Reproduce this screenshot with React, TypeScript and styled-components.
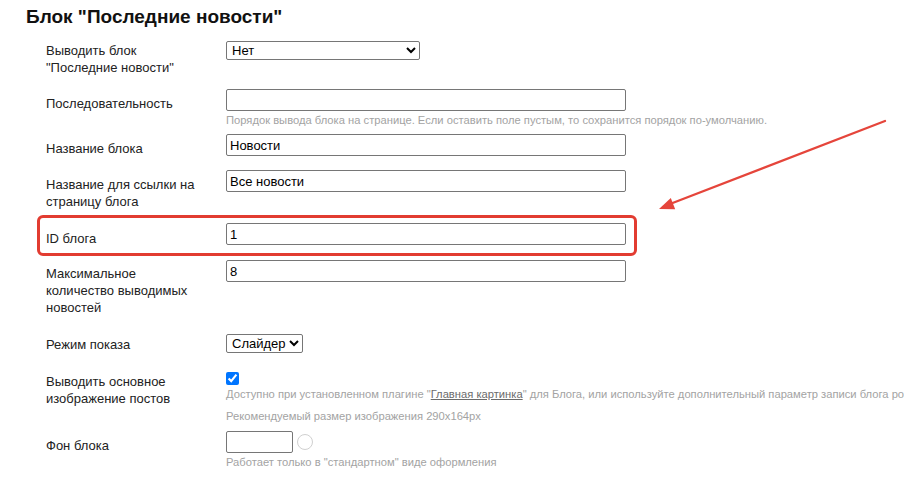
import React, { useState } from 'react';
import styled, { createGlobalStyle } from 'styled-components';

const GlobalStyle = createGlobalStyle`
  html, body {
    margin: 0;
    padding: 0;
    background: #fff;
    overflow: hidden;
  }
  body {
    font-family: 'Liberation Sans', Arial, sans-serif;
    color: #222;
  }
`;

const Page = styled.div`
  position: relative;
  width: 904px;
  height: 480px;
  padding: 6px 0 0 26px;
  box-sizing: border-box;
`;

const Title = styled.h2`
  margin: 0 0 13px;
  font-size: 19px;
  line-height: 22px;
  font-weight: bold;
  color: #111;
`;

const Form = styled.div`
  margin-left: 20px;
`;

const Row = styled.div<{ $mb?: number }>`
  display: grid;
  grid-template-columns: 180px 1fr;
  align-items: start;
  margin-bottom: ${(p) => p.$mb ?? 13}px;
`;

const Label = styled.div<{ $pt?: number }>`
  width: 160px;
  padding-top: ${(p) => p.$pt ?? 6}px;
  font-size: 13px;
  line-height: 17px;
  color: #222;
`;

const Field = styled.div`
  display: flex;
  flex-direction: column;
  align-items: flex-start;
  min-width: 0;
`;

const TextInput = styled.input<{ $w?: number }>`
  width: ${(p) => p.$w ?? 400}px;
  height: 22px;
  box-sizing: border-box;
  border: 1px solid #767676;
  border-radius: 2px;
  padding: 0 3px;
  font-family: 'Liberation Sans', Arial, sans-serif;
  font-size: 13px;
  color: #000;
  outline: none;
`;

const Select = styled.select<{ $w?: number }>`
  ${(p) => (p.$w ? `width: ${p.$w}px;` : '')}
  height: 19px;
  box-sizing: border-box;
  border: 1px solid #767676;
  border-radius: 2px;
  padding: 0 0 0 1px;
  font-family: 'Liberation Sans', Arial, sans-serif;
  font-size: 13px;
  color: #000;
  background: #fff;
`;

const Check = styled.input`
  margin: 0;
  width: 13px;
  height: 13px;
  accent-color: #0075ff;
`;

const Hint = styled.div<{ $mt?: number }>`
  margin-top: ${(p) => p.$mt ?? 3}px;
  font-size: 11.2px;
  line-height: 13px;
  color: #a3a3a3;
  white-space: nowrap;
  a {
    color: #6b6b6b;
    text-decoration: underline;
  }
`;

const ColorRow = styled.div`
  display: flex;
  align-items: center;
  gap: 4px;
`;

const Swatch = styled.span`
  width: 14px;
  height: 14px;
  border-radius: 50%;
  border: 1px solid #d0d0d0;
  background: #fff;
`;

const Highlight = styled.div`
  position: absolute;
  left: 37px;
  top: 215px;
  width: 600px;
  height: 41px;
  box-sizing: border-box;
  border: 3px solid #e23c31;
  border-radius: 6px;
  pointer-events: none;
`;

const Arrow = styled.svg`
  position: absolute;
  left: 0;
  top: 0;
  pointer-events: none;
`;

const App = () => {
  const [show, setShow] = useState('no');
  const [order, setOrder] = useState('');
  const [name, setName] = useState('Новости');
  const [linkName, setLinkName] = useState('Все новости');
  const [blogId, setBlogId] = useState('1');
  const [max, setMax] = useState('8');
  const [mode, setMode] = useState('slider');
  const [withImage, setWithImage] = useState(true);
  const [bg, setBg] = useState('');

  return (
    <Page>
      <GlobalStyle />
      <Title>Блок "Последние новости"</Title>
      <Form>
        <Row>
          <Label $pt={1}>
            Выводить блок
            <br />
            "Последние новости"
          </Label>
          <Field>
            <Select $w={194} value={show} onChange={(e) => setShow(e.target.value)}>
              <option value="no">Нет</option>
              <option value="yes">Да</option>
            </Select>
          </Field>
        </Row>
        <Row $mb={7}>
          <Label>Последовательность</Label>
          <Field>
            <TextInput value={order} onChange={(e) => setOrder(e.target.value)} />
            <Hint>
              Порядок вывода блока на странице. Если оставить поле пустым, то сохранится порядок
              по-умолчанию.
            </Hint>
          </Field>
        </Row>
        <Row>
          <Label>Название блока</Label>
          <Field>
            <TextInput value={name} onChange={(e) => setName(e.target.value)} />
          </Field>
        </Row>
        <Row>
          <Label>Название для ссылки на страницу блога</Label>
          <Field>
            <TextInput value={linkName} onChange={(e) => setLinkName(e.target.value)} />
          </Field>
        </Row>
        <Row>
          <Label $pt={7}>ID блога</Label>
          <Field>
            <TextInput value={blogId} onChange={(e) => setBlogId(e.target.value)} />
          </Field>
        </Row>
        <Row $mb={18}>
          <Label $pt={5}>Максимальное количество выводимых новостей</Label>
          <Field>
            <TextInput value={max} onChange={(e) => setMax(e.target.value)} />
          </Field>
        </Row>
        <Row $mb={19}>
          <Label $pt={2}>Режим показа</Label>
          <Field>
            <Select value={mode} onChange={(e) => setMode(e.target.value)}>
              <option value="slider">Слайдер</option>
              <option value="list">Список</option>
            </Select>
          </Field>
        </Row>
        <Row $mb={8}>
          <Label $pt={1}>Выводить основное изображение постов</Label>
          <Field>
            <Check
              type="checkbox"
              checked={withImage}
              onChange={(e) => setWithImage(e.target.checked)}
            />
            <Hint>
              Доступно при установленном плагине "<a href="#">Главная картинка</a>" для Блога, или
              используйте дополнительный параметр записи блога post_image
            </Hint>
            <Hint $mt={9}>Рекомендуемый размер изображения 290x164px</Hint>
          </Field>
        </Row>
        <Row>
          <Label>Фон блока</Label>
          <Field>
            <ColorRow>
              <TextInput $w={67} value={bg} onChange={(e) => setBg(e.target.value)} />
              <Swatch />
            </ColorRow>
            <Hint>Работает только в "стандартном" виде оформления</Hint>
          </Field>
        </Row>
      </Form>
      <Highlight />
      <Arrow width={904} height={480} viewBox="0 0 904 480">
        <line x1={885} y1={121} x2={670} y2={204} stroke="#e5453b" strokeWidth={2.2} strokeLinecap="round" />
        <polygon points="659,209 670.8,198 675.2,209.2" fill="#e5453b" />
      </Arrow>
    </Page>
  );
};

export default App;
